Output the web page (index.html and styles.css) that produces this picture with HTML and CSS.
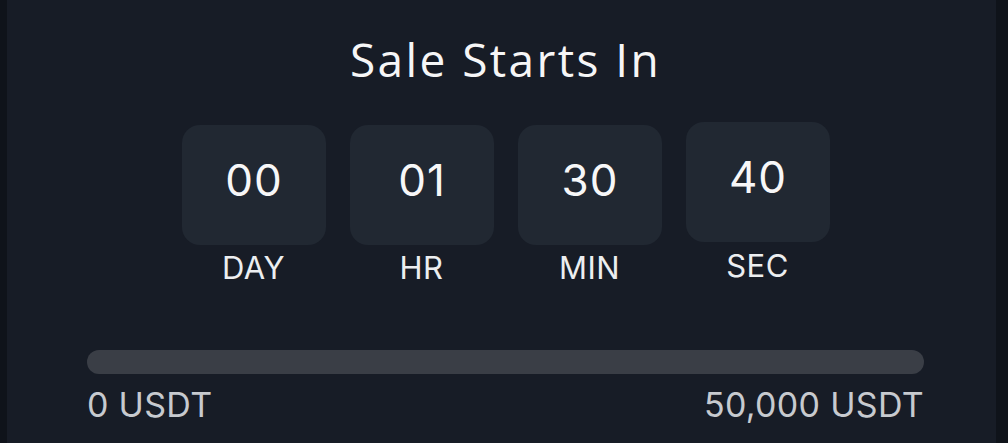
FILE: index.html
```html
<!DOCTYPE html>
<html lang="en">
<head>
<meta charset="utf-8">
<title>Sale Starts In</title>
<link rel="stylesheet" href="styles.css">
</head>
<body>
  <main class="panel">
    <h1 class="title">Sale Starts In</h1>
    <div class="timer">
      <div class="unit">
        <div class="box">00</div>
        <div class="label">DAY</div>
      </div>
      <div class="unit">
        <div class="box">01</div>
        <div class="label">HR</div>
      </div>
      <div class="unit">
        <div class="box">30</div>
        <div class="label">MIN</div>
      </div>
      <div class="unit unit--lift">
        <div class="box">40</div>
        <div class="label">SEC</div>
      </div>
    </div>
    <div class="bar"></div>
    <div class="range">
      <span>0 USDT</span>
      <span>50,000 USDT</span>
    </div>
  </main>
</body>
</html>
```
FILE: styles.css
```css
* { box-sizing: border-box; }

html, body {
  margin: 0;
  height: 443px;
  overflow: hidden;
  background: #0f131a;
}

.panel {
  margin-left: 7px;
  width: 989px;
  height: 443px;
  background: #171c26;
  padding: 29px 72px 0 80px;
  font-family: Inter, "Liberation Sans", sans-serif;
  color: #f4f5f6;
}

.title {
  margin: 0;
  text-align: center;
  font-family: "Open Sans", Lato, sans-serif;
  font-weight: 400;
  font-size: 46px;
  line-height: 60px;
  letter-spacing: 2.4px;
  color: #f6f6f7;
}

.timer {
  margin-top: 36px;
  display: flex;
  justify-content: center;
  align-items: flex-start;
  gap: 24px;
}

.unit {
  display: flex;
  flex-direction: column;
  align-items: center;
}

.unit--lift { margin-top: -3px; }

.box {
  width: 144px;
  height: 120px;
  border-radius: 18px;
  background: #212832;
  display: flex;
  align-items: center;
  justify-content: center;
  padding-bottom: 10px;
  font-size: 44px;
  letter-spacing: 1px;
  text-indent: 1px;
  font-weight: 400;
  color: #f7f7f8;
}

.label {
  margin-top: 5px;
  font-size: 31px;
  line-height: 36px;
  letter-spacing: 0.5px;
  color: #eceef0;
}

.unit--lift .label { margin-top: 6px; }

.bar {
  margin-top: 64px;
  height: 24px;
  border-radius: 12px;
  background: #3a3e46;
}

.range {
  margin-top: 11px;
  display: flex;
  justify-content: space-between;
  font-size: 34px;
  line-height: 40px;
  letter-spacing: 0.3px;
  color: #c7cacf;
}
```
